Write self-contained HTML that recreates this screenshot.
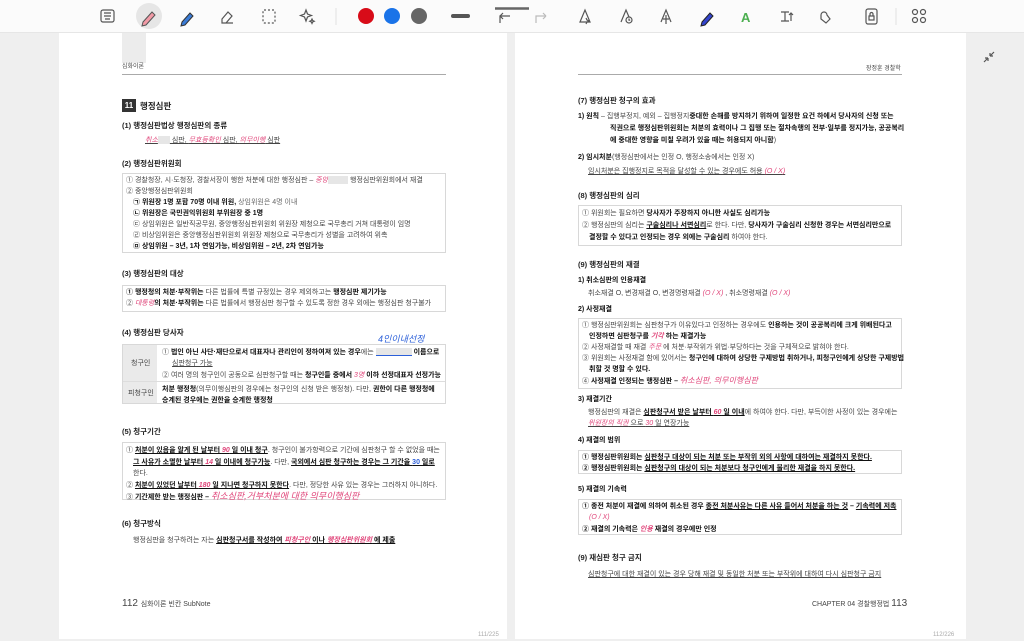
<!DOCTYPE html>
<html><head><meta charset="utf-8"><style>
*{margin:0;padding:0;box-sizing:border-box}
body{width:1024px;height:641px;background:#efefef;position:relative;overflow:hidden;font-family:"Liberation Sans","Noto Sans CJK KR",sans-serif;color:#333}
.tb{position:absolute;left:0;top:0;width:1024px;height:33px;background:#fbfbfb;border-bottom:1px solid #e6e6e6}
.pg{position:absolute;top:33px;background:#fff;height:606px}
.t{position:absolute;font-size:7px;white-space:nowrap;line-height:9px;color:#444}
.h{position:absolute;font-size:8.5px;font-weight:bold;white-space:nowrap;color:#222;line-height:10px}
.s{position:absolute;font-size:7.5px;font-weight:bold;white-space:nowrap;color:#222;line-height:10px}
.b{position:absolute;border:1px solid #d8d8d8}
.u{text-decoration:underline}
.p{color:#e0457a;font-style:italic}
.k{color:#111;font-weight:bold}
.bl{display:inline-block;background:#e6e6e6;height:8px;vertical-align:middle}
</style></head><body>
<div class="tb">
<svg width="1024" height="33" style="position:absolute;left:0;top:0">
<g fill="none" stroke="#555" stroke-width="1.2">
<rect x="101" y="10" width="13" height="12" rx="2"/><path d="M104 13h7M104 16h7M105 19h5"/>
<path d="M222 19l6-7 4 4-6 7h-4zM225 23h8"/>
<rect x="263" y="10" width="12" height="13" rx="1" stroke-dasharray="2 2"/>
<path d="M306 10l1.5 4 4 1.5-4 1.5-1.5 4-1.5-4-4-1.5 4-1.5z"/><path d="M312 19l.7 1.5 1.5.7-1.5.7-.7 1.5-.7-1.5-1.5-.7 1.5-.7z"/>
<path d="M495 8.5h34" stroke="#666" stroke-width="2.5"/>
<path d="M500 23v-7h10M500 16l3-3M500 16l3 3"/>
<path d="M536 23v-7h10" stroke="#bbb"/><path d="M546 16l-3-3M546 16l-3 3" stroke="#bbb"/>
<path d="M580 22l5-12 5 12zM586 18l1 2 2 1-2 1-1 2"/>
<path d="M621 22l5-12 3 7"/><circle cx="629" cy="20" r="3"/><path d="M629 18.5v1.7h1.2"/>
<path d="M661 22l5-12 5 12M666 15v9M663 19h6"/>
<path d="M781 12h8M781 21h8M785 12v9M791 13v8M789 15l2-2 2 2"/>
<path d="M821 15a3 3 0 1 1 6 0l3 4-4 4-5-4z"/>
<rect x="866" y="9" width="11" height="15" rx="2"/><rect x="869" y="16" width="5" height="4"/><path d="M870 16v-2a1.5 1.5 0 0 1 3 0v2"/>
<circle cx="915" cy="12" r="2.5"/><circle cx="923" cy="12" r="2.5"/><circle cx="915" cy="20" r="2.5"/><circle cx="923" cy="20" r="2.5"/>
</g>
<circle cx="149" cy="16" r="13" fill="#e6e6e6"/>
<path d="M143 22l9-10 3 3-9 10-4 1z" fill="#f29aa6" stroke="#555" stroke-width="1"/>
<path d="M182 22l8-9 3 3-8 9-4 1z" fill="#3a7bd5" stroke="#333" stroke-width="1"/>
<path d="M702 22l8-9 3 3-8 9-4 1z" fill="#3344cc" stroke="#222" stroke-width="1"/>
<text x="741" y="22" font-size="13" fill="#4caf50" font-family="Liberation Sans" font-weight="bold">A</text>
<line x1="336" y1="8" x2="336" y2="25" stroke="#e2e2e2"/>
<circle cx="366" cy="16" r="8" fill="#d80c18"/><circle cx="392" cy="16" r="8" fill="#1a73e8"/><circle cx="419" cy="16" r="8" fill="#666"/>
<rect x="451" y="14" width="19" height="4" rx="2" fill="#555"/>
<line x1="896" y1="8" x2="896" y2="25" stroke="#e2e2e2"/>
</svg>
</div>

<div class="pg" style="left:59px;width:448px"></div>
<div class="pg" style="left:515px;width:451px"></div>
<svg width="16" height="16" style="position:absolute;left:981px;top:49px"><path d="M3 13l4-4M7 9v3M7 9h-3M13 3l-4 4M9 7v-3M9 7h3" stroke="#555" fill="none" stroke-width="1.2"/></svg>

<!-- LEFT PAGE -->
<div style="position:absolute;left:122px;top:33px;width:24px;height:30px;background:#ececec"></div>
<div class="t" style="left:122px;top:63px;font-size:6px">심화이론</div>
<div style="position:absolute;left:122px;top:74px;width:324px;height:1px;background:#aaa"></div>
<div style="position:absolute;left:122px;top:99px;width:14px;height:13px;background:#333;color:#fff;font-size:8px;font-weight:bold;text-align:center;line-height:13px">11</div>
<div class="h" style="left:140px;top:101px">행정심판</div>
<div class="s" style="left:122px;top:121px">(1) 행정심판법상 행정심판의 종류</div>
<div class="t u" style="left:145px;top:136px"><span class="p">취소</span><span class="bl" style="width:12px"></span> 심판, <span class="p">무효등확인</span> 심판, <span class="p">의무이행</span> 심판</div>
<div class="s" style="left:122px;top:159px">(2) 행정심판위원회</div>
<div class="b" style="left:122px;top:173px;width:324px;height:80px"></div>
<div class="t" style="left:126px;top:176px">① 경찰청장, 시·도청장, 경찰서장이 행한 처분에 대한 행정심판 – <span class="p">중앙</span><span class="bl" style="width:20px"></span> 행정심판위원회에서 재결</div>
<div class="t" style="left:126px;top:187px">② 중앙행정심판위원회</div>
<div class="t k" style="left:133px;top:198px">㉠ 위원장 1명 포함 70명 이내 위원, <span style="font-weight:normal;color:#666">상임위원은 4명 이내</span></div>
<div class="t k" style="left:133px;top:209px">㉡ 위원장은 국민권익위원회 부위원장 중 1명</div>
<div class="t" style="left:133px;top:220px">㉢ 상임위원은 일반직공무원, 중앙행정심판위원회 위원장 제청으로 국무총리 거쳐 대통령이 임명</div>
<div class="t" style="left:133px;top:231px">㉣ 비상임위원은 중앙행정심판위원회 위원장 제청으로 국무총리가 성별을 고려하여 위촉</div>
<div class="t k" style="left:133px;top:242px">㉤ 상임위원 – 3년, 1차 연임가능, 비상임위원 – 2년, 2차 연임가능</div>
<div class="s" style="left:122px;top:269px">(3) 행정심판의 대상</div>
<div class="b" style="left:122px;top:285px;width:324px;height:27px"></div>
<div class="t" style="left:126px;top:288px"><span class="k">① 행정청의 처분·부작위는</span> 다른 법률에 특별 규정있는 경우 제외하고는 <span class="k">행정심판 제기가능</span></div>
<div class="t" style="left:126px;top:299px">② <span class="p">대통령</span><span class="k">의 처분·부작위는</span> 다른 법률에서 행정심판 청구할 수 있도록 정한 경우 외에는 행정심판 청구불가</div>
<div class="s" style="left:122px;top:328px">(4) 행정심판 당사자</div>
<div class="b" style="left:122px;top:344px;width:324px;height:60px"></div>
<div style="position:absolute;left:123px;top:345px;width:34px;height:58px;background:#eaeaea"></div>
<div style="position:absolute;left:123px;top:381px;width:322px;height:1px;background:#ddd"></div>
<div class="t" style="left:131px;top:359px">청구인</div>
<div class="t" style="left:128px;top:389px">피청구인</div>
<div class="t" style="left:378px;top:335px;color:#2b5fd9;font-style:italic;font-size:9px">4인이내선정</div>
<div class="t" style="left:162px;top:348px">① <span class="k">법인 아닌 사단·재단으로서 대표자나 관리인이 정하여져 있는 경우</span>에는 <span class="bl" style="width:36px;border-bottom:1px solid #2b5fd9"></span> <span class="k">이름으로</span></div>
<div class="t u" style="left:172px;top:359px">심판청구 가능</div>
<div class="t" style="left:162px;top:371px">② 여러 명의 청구인이 공동으로 심판청구할 때는 <span class="k">청구인들 중에서</span> <span class="p">3명</span> <span class="k">이하 선정대표자 선정가능</span></div>
<div class="t" style="left:162px;top:385px"><span class="k">처분 행정청</span>(의무이행심판의 경우에는 청구인의 신청 받은 행정청). 다만, <span class="k">권한이 다른 행정청에</span></div>
<div class="t" style="left:162px;top:396px"><span class="k">승계된 경우에는 권한을 승계한 행정청</span></div>
<div class="s" style="left:122px;top:427px">(5) 청구기간</div>
<div class="b" style="left:122px;top:442px;width:324px;height:58px"></div>
<div class="t" style="left:126px;top:446px">① <span class="u k">처분이 있음을 알게 된 날부터 <span class="p">90</span> 일 이내 청구</span>. 청구인이 불가항력으로 기간에 심판청구 할 수 없었을 때는</div>
<div class="t" style="left:133px;top:458px"><span class="u k">그 사유가 소멸한 날부터 <span class="p">14</span> 일 이내에 청구가능</span>. 다만, <span class="u k">국외에서 심판 청구하는 경우는 그 기간을 <span style="color:#2b5fd9">30</span> 일로</span></div>
<div class="t" style="left:133px;top:469px">한다.</div>
<div class="t" style="left:126px;top:481px">② <span class="u k">처분이 있었던 날부터 <span class="p">180</span> 일 지나면 청구하지 못한다</span>. 다만, 정당한 사유 있는 경우는 그러하지 아니하다.</div>
<div class="t" style="left:126px;top:492px">③ <span class="k">기간제한 받는 행정심판 –</span> <span class="p" style="font-size:9px">취소심판,거부처분에 대한 의무이행심판</span></div>
<div class="s" style="left:122px;top:519px">(6) 청구방식</div>
<div class="t" style="left:133px;top:536px">행정심판을 청구하려는 자는 <span class="u k">심판청구서를 작성하여 <span class="p">피청구인</span> 이나 <span class="p">행정심판위원회</span> 에 제출</span></div>
<div class="t" style="left:122px;top:598px;font-size:10px;line-height:12px">112 <span style="font-size:7px">심화이론 빈칸 SubNote</span></div>
<div class="t" style="left:478px;top:631px;font-size:6px;color:#aaa">111/225</div>

<!-- RIGHT PAGE -->
<div class="t" style="left:866px;top:65px;font-size:6px">장정훈 경찰학</div>
<div style="position:absolute;left:578px;top:74px;width:324px;height:1px;background:#aaa"></div>
<div class="s" style="left:578px;top:96px">(7) 행정심판 청구의 효과</div>
<div class="t" style="left:578px;top:112px"><span class="k">1) 원칙</span> – 집행부정지, 예외 – 집행정지<span class="k">중대한 손해를 방지하기 위하여 일정한 요건 하에서 당사자의 신청 또는</span></div>
<div class="t k" style="left:610px;top:124px">직권으로 행정심판위원회는 처분의 효력이나 그 집행 또는 절차속행의 전부·일부를 정지가능, 공공복리</div>
<div class="t" style="left:610px;top:136px"><span class="k">에 중대한 영향을 미칠 우려가 있을 때는 허용되지 아니함</span>)</div>
<div class="t" style="left:578px;top:153px"><span class="k">2) 임시처분</span>(행정심판에서는 인정 O, 행정소송에서는 인정 X)</div>
<div class="t u" style="left:588px;top:167px">임시처분은 집행정지로 목적을 달성할 수 있는 경우에도 허용 <span class="p">(O / X)</span></div>
<div class="s" style="left:578px;top:191px">(8) 행정심판의 심리</div>
<div class="b" style="left:578px;top:205px;width:324px;height:41px"></div>
<div class="t" style="left:582px;top:209px">① 위원회는 필요하면 <span class="k">당사자가 주장하지 아니한 사실도 심리가능</span></div>
<div class="t" style="left:582px;top:221px">② 행정심판의 심리는 <span class="u k">구술심리나 서면심리</span>로 한다. 다만, <span class="k">당사자가 구술심리 신청한 경우는 서면심리만으로</span></div>
<div class="t" style="left:589px;top:233px"><span class="k">결정할 수 있다고 인정되는 경우 외에는 구술심리</span> 하여야 한다.</div>
<div class="s" style="left:578px;top:260px">(9) 행정심판의 재결</div>
<div class="t k" style="left:578px;top:276px">1) 취소심판의 인용재결</div>
<div class="t" style="left:588px;top:289px">취소재결 O, 변경재결 O, 변경명령재결 <span class="p">(O / X)</span> , 취소명령재결 <span class="p">(O / X)</span></div>
<div class="t k" style="left:578px;top:305px">2) 사정재결</div>
<div class="b" style="left:578px;top:318px;width:324px;height:71px"></div>
<div class="t" style="left:582px;top:321px">① 행정심판위원회는 심판청구가 이유있다고 인정하는 경우에도 <span class="k">인용하는 것이 공공복리에 크게 위배된다고</span></div>
<div class="t k" style="left:589px;top:332px">인정하면 심판청구를 <span class="p">기각</span> 하는 재결가능</div>
<div class="t" style="left:582px;top:343px">② 사정재결할 때 재결 <span class="p">주문</span> 에 처분·부작위가 위법·부당하다는 것을 구체적으로 밝혀야 한다.</div>
<div class="t" style="left:582px;top:354px">③ 위원회는 사정재결 함에 있어서는 <span class="k">청구인에 대하여 상당한 구제방법 취하거나, 피청구인에게 상당한 구제방법</span></div>
<div class="t k" style="left:589px;top:365px">취할 것 명할 수 있다.</div>
<div class="t" style="left:582px;top:376px">④ <span class="k">사정재결 인정되는 행정심판 –</span> <span class="p" style="font-size:8px">취소심판, 의무이행심판</span></div>
<div class="t k" style="left:578px;top:395px">3) 재결기간</div>
<div class="t" style="left:588px;top:408px">행정심판의 재결은 <span class="u k">심판청구서 받은 날부터 <span class="p">60</span> 일 이내</span>에 하여야 한다. 다만, 부득이한 사정이 있는 경우에는</div>
<div class="t u" style="left:588px;top:419px"><span class="p">위원장의 직권</span> 으로 <span class="p">30</span> 일 연장가능</div>
<div class="t k" style="left:578px;top:436px">4) 재결의 범위</div>
<div class="b" style="left:578px;top:450px;width:324px;height:24px"></div>
<div class="t" style="left:582px;top:453px"><span class="k">① 행정심판위원회는</span> <span class="u k">심판청구 대상이 되는 처분 또는 부작위 외의 사항에 대하여는 재결하지 못한다.</span></div>
<div class="t" style="left:582px;top:464px"><span class="k">② 행정심판위원회는</span> <span class="u k">심판청구의 대상이 되는 처분보다 청구인에게 불리한 재결을 하지 못한다.</span></div>
<div class="t k" style="left:578px;top:485px">5) 재결의 기속력</div>
<div class="b" style="left:578px;top:499px;width:324px;height:36px"></div>
<div class="t k" style="left:582px;top:502px">① 종전 처분이 재결에 의하여 취소된 경우 <span class="u">종전 처분사유는 다른 사유 들어서 처분을 하는 것</span> – <span class="u">기속력에 저촉</span></div>
<div class="t" style="left:589px;top:513px"><span class="p">(O / X)</span></div>
<div class="t k" style="left:582px;top:525px">② 재결의 기속력은 <span class="p">인용</span> 재결의 경우에만 인정</div>
<div class="s" style="left:578px;top:553px">(9) 재심판 청구 금지</div>
<div class="t u" style="left:588px;top:570px">심판청구에 대한 재결이 있는 경우 당해 재결 및 동일한 처분 또는 부작위에 대하여 다시 심판청구 금지</div>
<div class="t" style="left:812px;top:598px;font-size:7px;line-height:12px">CHAPTER 04 경찰행정법 <span style="font-size:10px">113</span></div>
<div class="t" style="left:933px;top:631px;font-size:6px;color:#aaa">112/226</div>
</body></html>
